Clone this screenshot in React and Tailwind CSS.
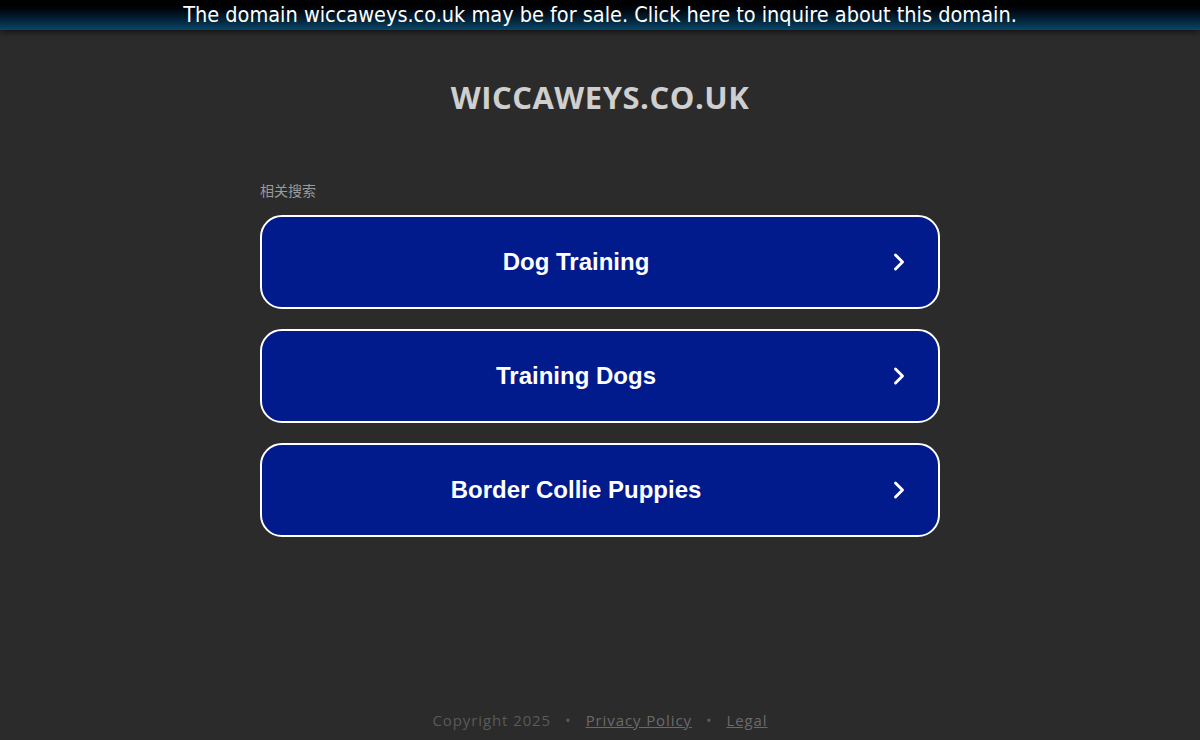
import { ChevronRight } from 'lucide-react'

const links = ['Dog Training', 'Training Dogs', 'Border Collie Puppies']

function App() {
  return (
    <div className="min-h-screen h-[740px] bg-[#2b2b2b] flex flex-col overflow-hidden">
      <div className="h-[30px] flex items-center justify-center bg-gradient-to-b from-[#000000] to-[#0b4669] shadow-[0_2px_6px_rgba(0,0,0,0.6)] relative z-10">
        <span className="text-white text-[21.5px] leading-[30px] font-['DejaVu_Sans_Condensed','DejaVu_Sans',sans-serif]">
          The domain wiccaweys.co.uk may be for sale. Click here to inquire about this domain.
        </span>
      </div>

      <h1 className="mt-[47px] text-center text-[#cfcfcf] text-[31px] font-bold tracking-[0.5px] leading-[40px] font-['Open_Sans',sans-serif]">
        WICCAWEYS.CO.UK
      </h1>

      <div className="w-[680px] mx-auto mt-[64px]">
        <div className="text-[14px] text-[#9a9a9a] leading-[18px] font-['Noto_Sans_CJK_SC',sans-serif]">相关搜索</div>
        <div className="mt-[16px] flex flex-col gap-[20px]">
          {links.map(label => (
            <div
              key={label}
              className="h-[94px] rounded-[22px] border-2 border-white bg-[#011a8c] flex items-center relative"
            >
              <span className="flex-1 text-center text-white text-[24px] font-bold font-['Liberation_Sans',Arial,sans-serif] pr-[48px]">
                {label}
              </span>
              <ChevronRight className="absolute right-[25px] text-white" size={28} strokeWidth={2.5} />
            </div>
          ))}
        </div>
      </div>

      <div className="mt-auto mb-[9px] flex justify-center items-center gap-[14px] text-[15px] text-[#5a5a5a] tracking-[0.9px] font-['Open_Sans',sans-serif]">
        <span>Copyright 2025</span>
        <span>•</span>
        <span className="underline text-[#6a6a6a]">Privacy Policy</span>
        <span>•</span>
        <span className="underline text-[#6a6a6a]">Legal</span>
      </div>
    </div>
  )
}

export default App
